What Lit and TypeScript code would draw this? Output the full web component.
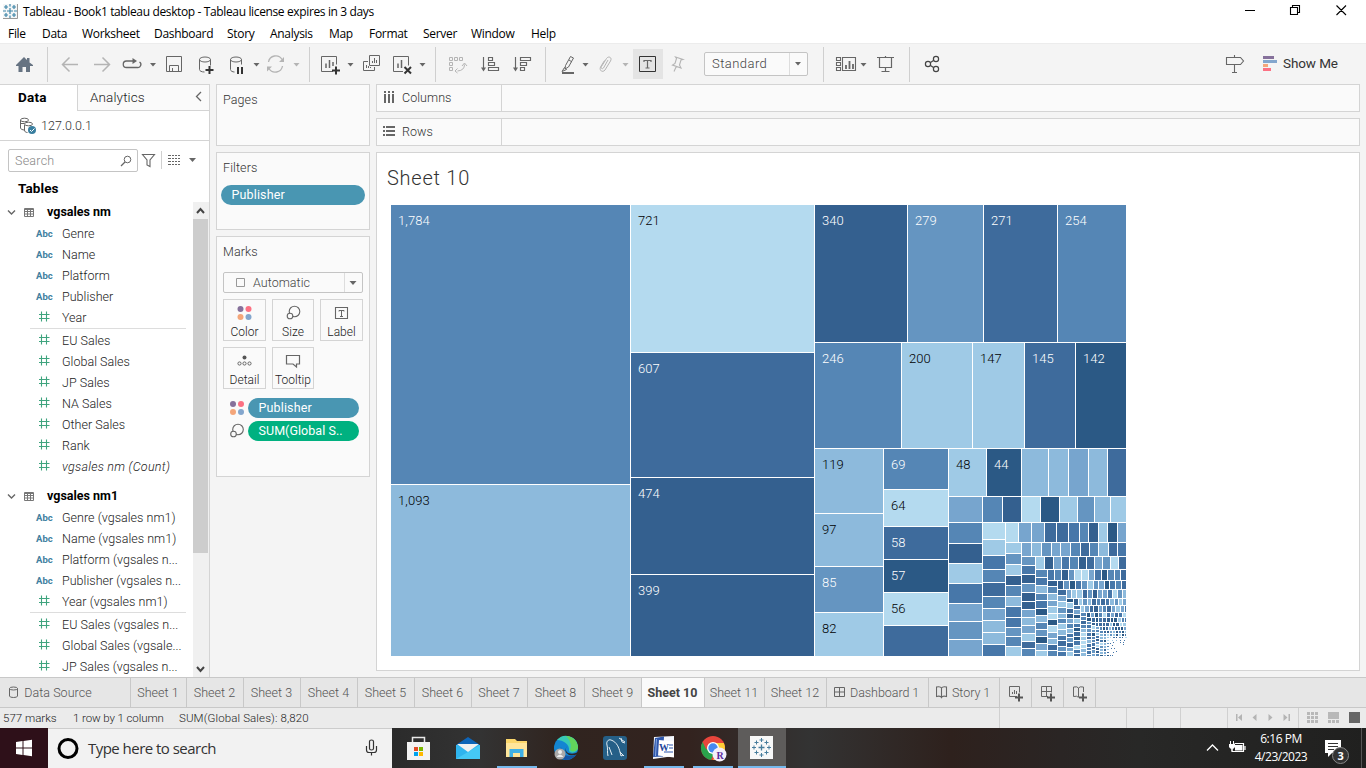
import { LitElement, html, svg, css } from "lit";
import { customElement } from "lit/decorators.js";

type Strip = [string, number, number[], string];

const PALETTE = ["#2b5985", "#34608f", "#3e6b9c", "#4777a9", "#5586b5", "#6595c1", "#77a5ce", "#8dbadc", "#9fcae6", "#b4daef"];

// Each strip: "c" column / "r" row, its far edge, inner cuts, one palette digit per cell.
const STRIPS: Strip[] = [
  ["c", 630, [484], "47"],
  ["c", 814, [352, 477, 574], "9211"],
  ["r", 342, [907, 983, 1057], "1524"],
  ["r", 448, [901, 972, 1024, 1075], "48820"],
  ["c", 883, [513, 566, 612], "7758"],
  ["c", 948, [489, 526, 559, 592, 625], "492092"],
  ["r", 496, [986, 1021, 1048, 1068, 1088, 1107], "8077672"],
  ["r", 522, [982, 1002, 1021, 1040, 1059, 1077, 1094, 1110], "641908578"],
  ["c", 982, [543, 563, 583, 603, 621, 639], "4183656"],
  ["c", 1005, [539, 555, 569, 582, 596, 608, 620, 632, 644], "9834246773"],
  ["r", 542, [1018, 1031, 1044, 1056, 1068, 1079, 1088, 1098, 1107, 1117], "96622341806"],
  ["c", 1021, [553, 564, 575, 585, 596, 606, 617, 627, 636, 646], "85814733548"],
  ["r", 556, [1031, 1041, 1051, 1060, 1070, 1080, 1089, 1098, 1108, 1117], "67566424723"],
  ["c", 1035, [565, 574, 583, 592, 601, 609, 617, 625, 633, 641, 648], "531511676824"],
  ["r", 569, [1044, 1053, 1061, 1069, 1078, 1086, 1094, 1102, 1110, 1118], "81634126592"],
  ["c", 1047, [577, 585, 593, 600, 608, 615, 622, 629, 636, 643, 650], "437430745068"],
  ["r", 580, [1054, 1061, 1068, 1074, 1081, 1088, 1094, 1101, 1107, 1114, 1120], "341599630442"],
  ["c", 1057, [586, 593, 600, 606, 613, 619, 625, 632, 638, 644, 650], "147689096724"],
  ["r", 589, [1063, 1069, 1075, 1081, 1087, 1093, 1098, 1104, 1109, 1115, 1121], "150358560342"],
  ["c", 1066, [595, 601, 607, 613, 618, 623, 629, 635, 640, 646, 651], "268574873253"],
  ["r", 598, [1071, 1076, 1082, 1087, 1092, 1097, 1102, 1107, 1112, 1117, 1122], "688251663957"],
  ["c", 1073, [602, 608, 613, 618, 623, 628, 633, 637, 642, 647, 651], "082164735268"],
  ["r", 605, [1078, 1082, 1087, 1091, 1096, 1100, 1105, 1109, 1114, 1118, 1122], "185724237586"],
];

interface Cell { x: number; y: number; w: number; h: number; c: string }

function buildCells(): Cell[] {
  const cells: Cell[] = [];
  let left = 390, top = 204;
  const right = 1126, bottom = 656;
  for (const [dir, edge, cuts, tones] of STRIPS) {
    let prev = dir === "c" ? top : left;
    [...cuts, dir === "c" ? bottom : right].forEach((cut, i) => {
      const c = PALETTE[+tones[i]];
      cells.push(dir === "c"
        ? { x: left + 1, y: prev + 1, w: edge - left - 1, h: cut - prev - 1, c }
        : { x: prev + 1, y: top + 1, w: cut - prev - 1, h: edge - top - 1, c });
      prev = cut;
    });
    if (dir === "c") left = edge; else top = edge;
  }
  // The long tail: strips keep shrinking toward the lower right corner.
  const widths = [7, 6, 5, 4, 4, 4, 3];
  const heights = [7, 5, 5, 4, 4, 3, 3];
  const pitch = [4.4, 4, 3.7, 3.4, 3, 3, 3];
  let seed = 7;
  const tone = () => {
    seed = (seed * 73 + 41) % 1009;
    return PALETTE[seed % 10];
  };
  for (let k = 0; k < widths.length; k++) {
    const w = widths[k] - 1, h = heights[k] - 1;
    for (let y = top; y < bottom - 1; y += pitch[k]) {
      const a = Math.round(y), b = Math.min(bottom, Math.round(y + pitch[k]));
      cells.push({ x: left + 1, y: a + 1, w, h: Math.max(1, b - a - 1), c: tone() });
    }
    left += widths[k];
    for (let x = left; x < right - 1; x += pitch[k]) {
      const a = Math.round(x), b = Math.min(right, Math.round(x + pitch[k]));
      cells.push({ x: a + 1, y: top + 1, w: Math.max(1, b - a - 1), h, c: tone() });
    }
    top += heights[k];
  }
  // Single pixel marks that close the tail.
  for (let x = 1107; x < 1126; x += 3) cells.push({ x, y: 637, w: x % 2 ? 2 : 1, h: 1, c: tone() });
  for (let x = 1108; x < 1126; x += 4) cells.push({ x, y: 640, w: 1, h: 1, c: tone() });
  for (let y = 640; y < 656; y += 3) cells.push({ x: 1107, y, w: 2, h: 1, c: tone() });
  for (const [x, y] of [[1110, 643], [1113, 642], [1120, 642], [1123, 642], [1123, 644], [1112, 645], [1111, 648], [1114, 648], [1116, 651], [1113, 652], [1110, 655], [1112, 655]])
    cells.push({ x, y, w: 1, h: 1, c: PALETTE[3] });
  return cells;
}

const CELLS = buildCells();

const LABELS: [number, number, string, number][] = [
  [398, 225, "1,784", 1], [398, 505, "1,093", 0], [638, 225, "721", 0], [638, 373, "607", 1], [638, 498, "474", 1],
  [638, 595, "399", 1], [822, 225, "340", 1], [915, 225, "279", 1], [991, 225, "271", 1], [1065, 225, "254", 1],
  [822, 363, "246", 1], [909, 363, "200", 0], [980, 363, "147", 0], [1032, 363, "145", 1], [1083, 363, "142", 1],
  [822, 469, "119", 0], [822, 534, "97", 0], [822, 587, "85", 1], [822, 633, "82", 0], [891, 469, "69", 1],
  [891, 510, "64", 0], [891, 547, "58", 1], [891, 580, "57", 1], [891, 613, "56", 0], [956, 469, "48", 0], [994, 469, "44", 1],
];

// Icon drawn in page units: the view box starts at the icon's own corner.
const ic = (x: number, y: number, w: number, h: number, body: unknown) =>
  html`<svg class="ic" width=${w} height=${h} viewBox="${x} ${y} ${w} ${h}">${body}</svg>`;

const G = "#666", L = "#b4b4b4";
const line = (d: string, c = G, w = 1) => svg`<path d=${d} fill="none" stroke=${c} stroke-width=${w} />`;
const fill = (d: string, c = G) => svg`<path d=${d} fill=${c} />`;
const caret = (x: number, y = 63, c = G) => fill(`M${x} ${y}h6l-3 3.5z`, c);
const sep = (x: number) => fill(`M${x} 47h1v35h-1z`, "#cfcfcf");
const dots = (x: number, y: number) => svg`<circle cx=${x} cy=${y} r="3" fill="#86719b"/><circle cx=${x + 8} cy=${y} r="3" fill="#fc7183"/><circle cx=${x} cy=${y + 8} r="3" fill="#f4a67a"/><circle cx=${x + 8} cy=${y + 8} r="3" fill="#83a6cd"/>`;
const rings = (x: number, y: number) => svg`<circle cx=${x} cy=${y} r="5.3" fill="none" stroke="#666" stroke-width="1.1"/><circle cx=${x - 4.5} cy=${y + 4.5} r="2.8" fill="#fafafa" stroke="#666" stroke-width="1.1"/>`;

const TOOLBAR_LEFT = svg`
  ${fill("M16 65L24 57l3 3v-2h2.500v4.500L33 65v1h-3v6h-4v-5h-3.500v5H18.500v-6H16z", "#667382")}
  ${sep(47)}
  ${line("M78 64.500H63M69.500 57.500l-7 7 7 7", L, 1.5)}${line("M94 64.500h15M102.500 57.500l7 7-7 7", L, 1.500)}
  ${line("M133 61h-6.500a3 3 0 0 0 0 6.500h11a3 3 0 0 0 2-5.500", G, 1.300)}${fill("M132.500 58l4.500 3-4.500 3z")}${caret(150)}
  ${line("M166.500 56.500h15v15h-15zM169.500 71v-5.500h9V71M172.500 71v-3")}
  ${line("M199.500 59.500v10c0 1.500 2 2.500 5 2.500M210.500 59.500v6M199.500 59.500a5.500 2.500 0 1 0 11 0a5.500 2.500 0 1 0-11 0")}${line("M205.500 70h8M209.500 66v8", "#333", 2)}
  ${line("M230.500 59.500v10c0 1.500 2 2.500 4 2.500M241.500 59.500v5M230.500 59.500a5.500 2.500 0 1 0 11 0a5.500 2.500 0 1 0-11 0")}${line("M238 67v7M242 67v7", "#333", 2)}
  ${caret(253.5)}
  ${line("M268.500 62a7.300 7.300 0 0 1 13.500-2.500M282.500 66a7.300 7.300 0 0 1-13.500 2.500", L, 1.300)}${fill("M284 57v5h-5zM267 71.500v-5h5z", L)}
  ${caret(293.5, 63, L)}${sep(309)}
  ${line("M333 71.500h-11.500v-15h15v8")}${line("M326 68v-4.500M329.500 68v-8M333 66v-4", G, 1.500)}${line("M332 70.500h8M336 66.500v8", "#333", 2)}
  ${caret(347.5)}
  ${line("M369.500 55.500h10v10h-10zM368 61.500h-4.500v9h11V67")}${line("M372.500 63v-2M374.500 63v-5M376.500 63v-3M366.500 68v-3M368.500 68v-2M370.500 68v-1")}
  ${line("M403 71.500h-9.500v-15h15v9")}${line("M398 68v-4.500M401.500 68v-8", G, 1.500)}${line("M404.500 67l6.500 6.500M411 67l-6.500 6.500", "#333", 2)}
  ${caret(419.5)}${sep(435)}
  ${line("M449.500 57.500h3v3h-3zM454.500 57.500h3v3h-3zM459.500 57.500h3v3h-3zM449.500 62.500h3v3h-3zM449.500 67.500h3v3h-3zM464.500 64.500q0 6-7 6.500M457.500 68.500l-2.500 2.500 2.500 2M462 66l2.500-3 2.500 3", L)}
  ${line("M483.500 57v12M488.500 57.500h4v3h-4zM488.500 62.500h6v3h-6zM488.500 67.500h10v3h-10z", G, 1.15)}${fill("M481 67.500h5l-2.500 4z")}
  ${line("M515.500 57v12M520.500 57.500h10v3h-10zM520.500 62.500h6v3h-6zM520.500 67.500h4v3h-4z", G, 1.15)}${fill("M513 67.500h5l-2.500 4z")}
  ${sep(545)}
  ${line("M565.500 65.500l5-9 3 1.500-5 9-3.500 2zM569 60l3 2M562 71.500l2.500-4 2 2z")}${fill("M562 72h12v2h-12z")}${caret(582.5)}
  ${line("M608 60l-4.500 8c-1 1.500-3 .5-2-1.500l5-8c2-3 6-1 4 2.500l-5.500 9c-2.500 3-6 .500-4.500-3l4-6.500", L)}${caret(622.5, 63, L)}
  ${fill("M633 49h30v30h-30z", "#e4e4e4")}${line("M639.500 56.500h16v15h-16z", "#333")}${line("M644 62v-1.500h7V62M647.500 60.500v8M645.500 68h4", G, 1.200)}
  ${line("M675.500 57l7.500 2.500-2 .5-1.500 5 1.500 3-8.500-3 2.500-1.500 1.500-5zM676.500 66l-2.500 5.500", L, 1.1)}
`;

const LIST: [string, string][] = [
  ["t", "vgsales nm"], ["a", "Genre"], ["a", "Name"], ["a", "Platform"], ["a", "Publisher"], ["n", "Year"], ["-", ""],
  ["n", "EU Sales"], ["n", "Global Sales"], ["n", "JP Sales"], ["n", "NA Sales"], ["n", "Other Sales"], ["n", "Rank"], ["i", "vgsales nm (Count)"], ["g", ""],
  ["t", "vgsales nm1"], ["a", "Genre (vgsales nm1)"], ["a", "Name (vgsales nm1)"], ["a", "Platform (vgsales n..."], ["a", "Publisher (vgsales n..."],
  ["n", "Year (vgsales nm1)"], ["-", ""], ["n", "EU Sales (vgsales n..."], ["n", "Global Sales (vgsale..."], ["n", "JP Sales (vgsales n..."],
];

const book = (x: number) => line(`M${x + .5} 687v9.500q4-1 5 1q1-2 5-1V687q-4-.800-5 1q-1-1.800-5-1zM${x + 5.500} 688v9.500`, G, 1.100);
const grid = (x: number) => line(`M${x + .5} 687.500h10v9h-10zM${x + 5.500} 687v10M${x} 692h11`);

@customElement("app-root")
export class AppRoot extends LitElement {
  static styles = css`
    :host { display: block; width: 1366px; height: 768px; overflow: hidden; background: #f4f4f4; color: #222; font: 300 12.5px "Roboto", sans-serif; }
    * { box-sizing: border-box; }
    .ic { display: block; flex: none; }
    .win { display: flex; flex-direction: column; height: 768px; white-space: nowrap; }
    .seg { font-family: "Open Sans", sans-serif; font-weight: 400; }
    .title { display: flex; height: 23px; background: #fff; color: #000; font-size: 12px; align-items: center; padding-left: 3px; letter-spacing: -.365px; }
    .title .cap { margin-left: 4px; flex: 1; }
    .menu { display: flex; height: 20px; background: #fff; color: #000; font-size: 12px; line-height: 21px; letter-spacing: -.3px; }
    .menu span { flex: none; }
    .m0 { width: 34px; margin-left: 8px; } .m1 { width: 40px; } .m2 { width: 72px; } .m3 { width: 73px; } .m4 { width: 43px; } .m5 { width: 59px; }
    .m6 { width: 40px; } .m7 { width: 54px; } .m8 { width: 48px; } .m9 { width: 60px; }
    .tools { display: flex; height: 41px; border-top: 1px solid #ececec; align-items: flex-start; }
    .tools > .ic { margin-top: -1px; }
    .combo { display: flex; width: 104px; height: 24px; margin-top: 8px; border: 1px solid #c4c4c4; border-radius: 2px; background: #fafafa; align-items: center; color: #444; font-size: 13px; letter-spacing: .45px; }
    .combo span { width: 85px; padding-left: 7px; border-right: 1px solid #ddd; line-height: 22px; }
    .showme { font-size: 13.500px; line-height: 38px; letter-spacing: -.1px; margin-left: 5px; font-weight: 400; color: #333; }
    .body { display: flex; height: 593px; }
    .side { width: 210px; background: #fff; border: solid #d4d4d4; border-width: 1px 1px 0 0; display: flex; flex-direction: column; }
    .tabs { display: flex; height: 26px; line-height: 25px; font-size: 13.500px; }
    .tabs .on { width: 77px; padding-left: 18px; font-weight: 700; color: #000; letter-spacing: .2px; }
    .tabs .off { flex: 1; border: solid #d4d4d4; border-width: 0 0 1px 1px; background: #fafafa; padding-left: 12px; display: flex; justify-content: space-between; letter-spacing: .12px; }
    .tabs .off .ic { margin-right: 1px; }
    .conn { display: flex; height: 30px; border-bottom: 1px solid #d4d4d4; align-items: center; padding: 0 0 1px 18px; gap: 4px; font-size: 12.500px; letter-spacing: .05px; color: #333; }
    .find { display: flex; padding: 8px 0 0 8px; height: 39px; align-items: flex-start; }
    .box { width: 130px; height: 23px; border: 1px solid #c4c4c4; border-radius: 2px; display: flex; justify-content: space-between; align-items: center; padding: 0 5px 0 6px; color: #888; letter-spacing: .25px; }
    .tbl { font-weight: 700; color: #000; font-size: 13.500px; padding-left: 18px; height: 22px; line-height: 17px; letter-spacing: .1px; }
    .lists { display: flex; flex: 1; min-height: 0; overflow: hidden; }
    .list { width: 193px; margin-top: -1px; }
    .row { display: flex; height: 21px; align-items: center; letter-spacing: .03px; }
    .row.head { font-weight: 700; color: #000; letter-spacing: 0; }
    .row.it { font-style: italic; letter-spacing: .26px; }
    .name { padding-top: 1px; }
    .abc { width: 26px; margin-left: 36px; font: 700 9.500px "Roboto", sans-serif; color: #3f7f9f; letter-spacing: 0; padding-top: 1px; }
    .num { margin-left: 36px; }
    .rule { height: 1px; background: #ddd; margin: 1px 7px 0 30px; }
    .gap { height: 9px; }
    .bar { width: 16px; background: #f0f0f0; display: flex; flex-direction: column; justify-content: space-between; height: 475px; }
    .thumb { height: 334px; margin-bottom: auto; background: #cdcdcd; width: 15px; }
    .cards { width: 154px; margin-left: 6px; display: flex; flex-direction: column; gap: 6px; }
    .card { border: 1px solid #d4d4d4; background: #fafafa; color: #444; padding: 7px 4px; }
    .card h4 { margin: 0; font: 300 12.500px/16px "Roboto", sans-serif; padding-left: 2px; letter-spacing: .1px; color: #333; }
    .pages { height: 62px; } .filters { height: 78px; } .marks { height: 241px; }
    .pill { height: 20px; border-radius: 10px; background: #4996b2; color: #fff; line-height: 20px; padding-left: 10.500px; font-weight: 400; letter-spacing: .15px; flex: 1; }
    .filters .pill { margin-top: 9px; }
    .green { background: #00b180; letter-spacing: .05px; }
    .auto { margin: 12px 2px 6px; height: 21px; border: 1px solid #c4c4c4; border-radius: 2px; display: flex; align-items: center; padding-left: 11px; letter-spacing: .05px; color: #444; }
    .auto span { flex: 1; padding-left: 7px; }
    .btns { display: grid; grid-template-columns: 43px 42px 43px; gap: 6px; padding: 0 2px; justify-content: start; column-gap: 6px; }
    .btn { height: 42px; border: 1px solid #d4d4d4; display: flex; flex-direction: column; align-items: center; color: #222; font-size: 12px; line-height: 16px; letter-spacing: 0; }
    .btn .ic { margin: 3px 0 1px; }
    .enc { display: flex; height: 20px; margin: 9px 6px 0 7px; align-items: center; }
    .enc + .enc { margin-top: 3px; }
    .enc .ic { margin-right: 1px; }
    .main { width: 984px; margin-left: 6px; display: flex; flex-direction: column; }
    .shelf { height: 28px; margin-bottom: 6px; border: 1px solid #d4d4d4; background: #fafafa; display: flex; flex: none; color: #333; letter-spacing: .05px; }
    .shelf > div { width: 125px; border-right: 1px solid #d4d4d4; display: flex; align-items: center; gap: 6px; padding: 0 0 1px 6px; }
    .sheet { height: 519px; border: 1px solid #d4d4d4; background: #fff; padding: 13px 0 0 10px; }
    .sheet h2 { margin: 0 0 13px; font: 300 20px/25px "Roboto", sans-serif; color: #333; letter-spacing: .75px; }
    .sheet svg { display: block; margin-left: 3px; }
    .lab { font: 300 13px "Roboto", sans-serif; letter-spacing: .1px; fill: #000; }
    .lab.w { fill: #fff; }
    .sheets { height: 31px; background: #e6e6e6; border: solid #c8c8c8; border-width: 1px 0; display: flex; color: #555; line-height: 29px; letter-spacing: .05px; }
    .sheets div { border-right: 1px solid #c8c8c8; display: flex; justify-content: center; align-items: center; gap: 5px; flex: none; padding-right: 1px; }
    .sheets .ds { width: 131px; padding-right: 30px; }
    .s56 { width: 56px; } .s57 { width: 57px; } .s60 { width: 60px; } .s62 { width: 62px; } .s97 { width: 102px; } .s68 { width: 71px; }
    .sheets .s31 { width: 32px; padding: 0; }
    .sheets .s97, .sheets .s68 { justify-content: flex-start; padding-left: 7px; gap: 4px; letter-spacing: -.05px; }
    .sheets .cur { width: 63px; background: #fafafa; font-weight: 700; color: #444; letter-spacing: 0; padding-bottom: 1px; }
    .status { height: 20px; background: #ebebeb; display: flex; align-items: center; font-size: 11.500px; letter-spacing: .12px; }
    .status span { flex: none; }
    .u0 { width: 73px; padding-left: 3px; letter-spacing: 0; } .u1 { width: 106px; letter-spacing: -.1px; } .status .u2 { flex: 1; }
    .task { height: 40px; display: flex; background: linear-gradient(90deg, #2b2b2b 392px, #333 480px, #30241f 560px, #33231f 690px, #333 810px, #2e211d 950px, #2a2524 1060px, #282827 1140px, #20201f 1366px); color: #fff; }
    .start { width: 48px; background: #2e1019; }
    .search { width: 344px; background: #f2f2f2; border-top: 1px solid #ccc; color: #333; display: flex; align-items: center; font-size: 15px; letter-spacing: -.53px; }
    .search span { flex: 1; padding: 0 0 2px 8px; }
    .clock { width: 64px; text-align: center; font-size: 12px; line-height: 18px; padding: 2px 2px 0 0; letter-spacing: -.48px; }
    .badge { font: 700 11px "Open Sans", sans-serif; fill: #fff; }
    .wl { font: 700 10px "Liberation Serif", serif; }
  `;

  private item([k, t]: [string, string]) {
    if (k === "-") return html`<div class="rule"></div>`;
    if (k === "g") return html`<div class="gap"></div>`;
    if (k === "t") return html`<div class="row head">${ic(0, 0, 47, 21, svg`${line("M8 9.500l3.500 3.500L15 9.500", G, 1.400)}${line("M24.500 7.500h9v8h-9zM24 8.500h10M24 10.500h10M24 13h10M27.500 8v8M30.500 8v8", "#777")}`)}${t}</div>`;
    return html`<div class="row ${k === "i" ? "it" : ""}">
      ${k === "a" ? html`<span class="abc">Abc</span>` : html`<span class="num">${ic(0, 0, 26, 21, line("M5.500 5.500v10M10.500 5.500v10M3 8.500h10.500M3 12.500h10.500", "#3fa47e", 1.100))}</span>`}<span class="name">${t}</span></div>`;
  }

  private tabs() {
    const s = (c: string, t: string) => html`<div class=${c}>${t}</div>`;
    return html`<div class="sheets">
      <div class="ds">${ic(9, 686, 11, 14, line("M10.500 688.500v7.500q0 1.500 4 1.500t4-1.500V688.500M10.500 688.500a4 1.500 0 1 0 8 0a4 1.500 0 1 0-8 0", G))}Data Source</div>
      ${s("s56", "Sheet 1")}${s("s57", "Sheet 2")}${s("s57", "Sheet 3")}${s("s57", "Sheet 4")}${s("s57", "Sheet 5")}${s("s57", "Sheet 6")}${s("s56", "Sheet 7")}${s("s57", "Sheet 8")}${s("s57", "Sheet 9")}
      ${s("cur", "Sheet 10")}${s("s60", "Sheet 11")}${s("s62", "Sheet 12")}
      <div class="s97">${ic(833, 686, 12, 13, grid(833))}Dashboard 1</div>
      <div class="s68">${ic(935, 686, 12, 13, book(935))}Story 1</div>
      <div class="s31">${ic(1000, 684, 16, 18, svg`${line("M1009 696.500h-7.500v-10h10v6M1004.500 694v-2M1006.500 694v-4M1008.500 694v-3")}${line("M1007 697.500h8M1011 693.500v8", "#555", 2)}`)}</div>
      <div class="s31">${ic(1031, 684, 16, 18, svg`${line("M1039 696.500h-6.500v-10h10v6M1037.500 686v10M1032 691.500h11")}${line("M1038 697.500h8M1042 693.500v8", "#555", 2)}`)}</div>
      <div class="s31">${ic(1061, 684, 16, 18, svg`${line("M1062.500 687v9.500q4-1 5 1M1072.500 692v-5q-4-.800-5 1q-1-1.800-5-1M1067.500 688v9")}${line("M1068 697.500h8M1072 693.500v8", "#555", 2)}`)}</div>
    </div>`;
  }

  private tray() {
    const plus = (x: number, y: number, r: number, w = 1) => line(`M${x - r} ${y}h${2 * r}M${x} ${y - r}v${2 * r}`, "#477d9c", w);
    return svg`
      <g>${fill("M407 742h23v18h-23z", "#f3f3f3")}${line("M412.500 742v-4.500h12v4.500", "#e8e8e8", 1.500)}
      ${fill("M414 747h4v4h-4z", "#e34c26")}${fill("M419 747h4v4h-4z", "#7ab800")}${fill("M414 752h4v4h-4z", "#00a3ee")}${fill("M419 752h4v4h-4z", "#ffb900")}</g>
      ${fill("M456 745l12-8 12 8v14h-24z", "#0e65b8")}${fill("M456 745h24v14h-24z", "#2fb4ee")}${fill("M456 759l24-14v14z", "#45c8f5")}${fill("M457 744h22l-11 8z", "#f1f1f1")}
      ${fill("M506 739h9l2 2h10v16h-21z", "#fbd66b")}${fill("M506 743h21v14h-21z", "#ffe59a")}${fill("M509.500 757v-8h14v8h-3.500v-4h-7v4z", "#3fb0e6")}
      <circle cx="566" cy="748" r="12" fill="#1385d2"/>${fill("M557 740a12 12 0 0 1 21 7c0 6-7 7-9 4 1-7-6-11-12-11z", "#38c9b5")}${fill("M566 736a12 12 0 0 1 12 12c-1 4-6 4-8 2 2-5 0-10-4-14z", "#62d45c")}${fill("M561 747q1 9 9 9 4 0 7-2-5 6-12 6-8-4-4-13z", "#1454a3")}${fill("M567 746q-3 4 1 7 5 2 10-1l0 2q-5 2-9 1-6-3-2-9z", "#2e2522")}<circle cx="560" cy="754" r="5.500" fill="#aaa"/><circle cx="560" cy="752" r="2" fill="#eee"/>${fill("M556.500 757q3.500-5 7 0z", "#eee")}
      <rect x="603" y="736" width="24" height="24" rx="3" fill="#255f87"/>${line("M608 756c-1-4 0-7-1-11-1-3 1-6 4-5 6 2 8 8 9 12l4 4M609 747l3 8M619 738l6 4M621 738l1 4 3 1M620 752l1 4 2-1", "#e4edf2")}
      ${fill("M654 737l20-1v20l-21 3z", "#f5f8fd")}${fill("M655 738l9-1.500-1 20-10 .5z", "#2f57ab")}${fill("M659 740l15 1.500v16l-16-2z", "#fff")}${line("M669 745h4M669 748h4M664 752h9", "#2f57ab", 1)}${line("M656.500 739l-1 17", "#89a8e0", 1)}<text class="wl" x="659" y="750.500" fill="#1f479b">W</text>
      <circle cx="713" cy="748" r="12" fill="#e8453c"/>${fill("M702.600 742A12 12 0 0 0 711 760l4-9-9-2z", "#2aa24c")}${fill("M713 743h10.900A12 12 0 0 1 713 760l5-9z", "#ffcd35")}<circle cx="713" cy="748" r="6" fill="#fff"/><circle cx="713" cy="748" r="4.700" fill="#4688f1"/><circle cx="719.500" cy="754.500" r="7" fill="#f4effa"/><text class="wl" x="716.500" y="759" fill="#5a2b9c">R</text>
      ${fill("M738 728h48v40h-48z", "#5e5c5b")}${fill("M750 736h23v23h-23z", "#f7f8f8")}
      ${plus(761.500, 747.500, 3, 1.300)}${plus(761.500, 740, 2)}${plus(761.500, 755, 2)}${plus(754, 747.500, 2)}${plus(769, 747.500, 2)}${plus(756.500, 742.500, 2)}${plus(766.500, 742.500, 2)}${plus(756.500, 752.500, 2)}${plus(766.500, 752.500, 2)}
      ${fill("M497 766h40v2h-40zM644 766h40v2h-40zM693 766h40v2h-40zM738 766h48v2h-48z", "#76b9ed")}`;
  }

  render() {
    const b = (icon: unknown, t: string) => html`<div class="btn">${icon}<span>${t}</span></div>`;
    const menu = ["File", "Data", "Worksheet", "Dashboard", "Story", "Analysis", "Map", "Format", "Server", "Window", "Help"];
    return html`<div class="win">
      <div class="title seg">${ic(3, 4, 16, 16, svg`${fill("M3 4h15v15H3z", "#f4f6f7")}${line("M17.500 4v14.500H3", "#999")}${line("M10 8v6M7 11h6M10 4v2.500M10 15.500v2.500M3 11h3M14 11h3M6 5v4M4 7h4M14 5v4M12 7h4M6 13v4M4 15h4M14 13v4M12 15h4", "#3f86a8", 1.200)}`)}
        <span class="cap">Tableau - Book1 tableau desktop - Tableau license expires in 3 days</span>
        ${ic(1236, 0, 130, 23, line("M1245 10.500h10M1290.500 7.500h7v7h-7zM1292.500 7v-1.500h7v7h-1.500M1336.500 5.500l9.500 9.500M1346 5.500l-9.500 9.500", "#000", 1.100))}
      </div>
      <div class="menu seg">${menu.map((m, i) => html`<span class="m${i}">${m}</span>`)}</div>
      <div class="tools">
        ${ic(0, 43, 704, 40, TOOLBAR_LEFT)}
        <div class="combo"><span>Standard</span>${ic(790, 53, 17, 22, caret(795, 62))}</div>
        ${ic(808, 43, 450, 40, svg`${sep(823)}${line("M836.500 57.500h4v3h-4zM836.500 62.500h4v3h-4zM836.500 67.500h4v3h-4zM842.500 57.500h13v13h-13z", G, 1.100)}${line("M846 69v-4M849.500 69v-8M853 69v-5", G, 1.800)}${caret(860.5)}
          ${line("M877 57.500h17M879.500 57.500v10h12v-10M885.500 56v2M885.500 68v3.500M881.500 71.500h8", G, 1.200)}${sep(909)}
          ${line("M930.500 62.500l3-2M930.500 65.500l3 2", "#444", 1.200)}<circle cx="928" cy="64" r="2.600" fill="none" stroke="#444" stroke-width="1.200"/><circle cx="936" cy="59" r="2.600" fill="none" stroke="#444" stroke-width="1.200"/><circle cx="936" cy="69" r="2.600" fill="none" stroke="#444" stroke-width="1.200"/>
          ${line("M1226.500 57.500h14l3 3.500-3 3.500h-14zM1234.500 55v2M1234.500 65v7.500M1232 72.500h5", G, 1.100)}`)}
        ${ic(1258, 43, 20, 40, svg`${fill("M1263 56h11v3h-11z", "#86719b")}${fill("M1263 60h14v3h-14z", "#83a6cd")}${fill("M1263 64h5v3h-5z", "#f4a67a")}${fill("M1263 68h8v3h-8z", "#fc7183")}`)}
        <span class="showme">Show Me</span>
      </div>
      <div class="body">
        <div class="side">
          <div class="tabs"><span class="on">Data</span><span class="off">Analytics${ic(190, 85, 18, 25, line("M201 92l-4.500 4.500 4.500 4.500", G, 1.300))}</span></div>
          <div class="conn">${ic(18, 115, 19, 19, svg`${line("M20.500 119v8c0 1 2 2 4 2M20.500 119a4 1.800 0 1 0 8 0a4 1.800 0 1 0-8 0M24.500 124v5c0 1.500 1 2.500 3 2.500M24.500 123a4 1.800 0 1 0 8 0a4 1.800 0 1 0-8 0M20.500 122.500h4")}<circle cx="32" cy="129" r="4" fill="#3a7fa0"/>${line("M30 129l1.500 1.500 3-3", "#fff")}`)}127.0.0.1</div>
          <div class="find"><div class="box">Search${ic(119, 154, 12, 12, svg`<circle cx="126.500" cy="158.500" r="3.300" fill="none" stroke="#666"/>${line("M124 161l-4 4", G, 1.200)}`)}</div>
            ${ic(138, 149, 71, 23, svg`${line("M142.500 154.500h12l-4.500 5.500v6.500l-3-1.500v-5z", G, 1.100)}${fill("M161 151h1v18h-1z", "#d0d0d0")}${line("M168 155.500h12M168 158.500h12M168 161.500h12M168 164.500h12", G, 1.200)}${fill("M171 154h1v12h-1zM174 154h1v12h-1zM177 154h1v12h-1z", "#fff")}${fill("M189 158h7l-3.500 4z")}`)}</div>
          <div class="tbl">Tables</div>
          <div class="lists"><div class="list">${LIST.map(r => this.item(r))}</div>
            <div class="bar">${ic(0, 0, 16, 17, line("M4 11l3.500-4 3.500 4", "#444", 2))}<div class="thumb"></div>${ic(0, 0, 16, 17, line("M4 7l3.500 4L11 7", "#444", 2))}</div></div>
        </div>
        <div class="cards">
          <div class="card pages"><h4>Pages</h4></div>
          <div class="card filters"><h4>Filters</h4><div class="pill">Publisher</div></div>
          <div class="card marks"><h4>Marks</h4>
            <div class="auto">${ic(0, 0, 11, 11, line("M1.500 1.500h8v8h-8z", "#999"))}<span>Automatic</span>${ic(0, 0, 18, 19, svg`${fill("M0 0h1v19H0z", "#ddd")}${fill("M5.500 8h7l-3.500 4z")}`)}</div>
            <div class="btns">
              ${b(ic(0, 0, 20, 20, dots(5.5, 6)), "Color")}${b(ic(0, 0, 20, 20, rings(11.500, 8.500)), "Size")}${b(ic(0, 0, 20, 20, svg`${line("M3.500 4.500h12v11h-12z", G, 1.100)}${line("M7 8.500V7.500h5v1M9.500 7.500v6M8 13.500h3")}`), "Label")}
              ${b(ic(0, 0, 20, 20, svg`<circle cx="9.500" cy="6.500" r="2" fill="#555"/><circle cx="4.500" cy="12.500" r="1.600" fill="none" stroke="#666"/><circle cx="9.500" cy="12.500" r="1.600" fill="none" stroke="#666"/><circle cx="14.500" cy="12.500" r="1.600" fill="none" stroke="#666"/>`), "Detail")}${b(ic(0, 0, 20, 20, line("M3.500 4.500h13v8.500h-3v3l-3.500-3H3.500z", G, 1.200)), "Tooltip")}
            </div>
            <div class="enc">${ic(0, 0, 19, 20, dots(5, 6))}<div class="pill">Publisher</div></div>
            <div class="enc">${ic(0, 0, 19, 20, rings(10, 8.500))}<div class="pill green">SUM(Global S..</div></div>
          </div>
        </div>
        <div class="main">
          <div class="shelf"><div>${ic(383, 90, 13, 15, fill("M384 91h2v2h-2zM388 91h2v2h-2zM392 91h2v2h-2zM384 94h2v9h-2zM388 94h2v9h-2zM392 94h2v9h-2z"))}Columns</div></div>
          <div class="shelf"><div>${ic(383, 124, 13, 15, fill("M383 126h2v2h-2zM383 130h2v2h-2zM383 134h2v2h-2zM386 126h9v2h-9zM386 130h9v2h-9zM386 134h9v2h-9z"))}Rows</div></div>
          <div class="sheet"><h2>Sheet 10</h2>
            <svg width="738" height="454" viewBox="390 204 738 454">
              ${CELLS.map(c => svg`<rect x=${c.x} y=${c.y} width=${c.w} height=${c.h} fill=${c.c} />`)}
              ${LABELS.map(([x, y, t, w]) => svg`<text class=${w ? "lab w" : "lab"} x=${x} y=${y}>${t}</text>`)}
            </svg></div>
        </div>
      </div>
      ${this.tabs()}
      <div class="status"><span class="u0">577 marks</span><span class="u1">1 row by 1 column</span><span class="u2">SUM(Global Sales): 8,820</span>
        ${ic(991, 708, 375, 20, svg`${fill("M999 708h1v20h-1zM1126 708h1v20h-1zM1153 708h1v20h-1zM1180 708h1v20h-1zM1227 708h1v20h-1zM1298 708h1v20h-1z", "#d0d0d0")}
          ${fill("M1236 714h1.500v7h-1.500zM1242 714v7l-4-3.500zM1256.500 714v7l-4-3.500zM1268.500 714v7l4-3.500zM1283.500 714v7l4-3.500zM1288.500 714h1.500v7h-1.500z", "#b4b4b4")}
          ${fill("M1307 712h3v3h-3zM1311 712h3v3h-3zM1315 712h3v3h-3zM1307 716h3v3h-3zM1311 716h3v3h-3zM1315 716h3v3h-3zM1307 720h3v3h-3zM1311 720h3v3h-3zM1315 720h3v3h-3zM1328 712h11v7h-11zM1328 720h3v3h-3zM1332 720h3v3h-3zM1336 720h3v3h-3z", "#b8b8b8")}${fill("M1349 712h11v11h-11z", "#666")}`)}
      </div>
      <div class="task seg">
        <div class="start">${ic(0, 728, 48, 40, fill("M16 742l6.500-1v6.500H16zM23.500 741l8.500-1.200v7.700h-8.500zM16 748.500h6.500v6.500l-6.500-1zM23.500 748.500h8.500v7.700l-8.500-1.200z", "#fff"))}</div>
        <div class="search">${ic(48, 728, 32, 39, svg`<circle cx="68" cy="747.500" r="9" fill="none" stroke="#000" stroke-width="3"/>`)}<span>Type here to search</span>${ic(361, 729, 31, 39, line("M369.500 741.500q0-1.500 2-1.500t2 1.500v7q0 1.500-2 1.500t-2-1.500zM366.500 746v4q0 2.500 2.500 2.500h5q2.500 0 2.500-2.500v-4M371.500 753v2.500", "#333", 1.200))}</div>
        ${ic(392, 728, 858, 40, svg`${this.tray()}${line("M1207 750.500l5.500-5.500 5.500 5.500", "#fff", 1.300)}
          ${line("M1234.500 743.500h9v8h-11.500v-3M1245 746v4", "#fff", 1.200)}${fill("M1235 745h7.500v5.500h-7.500zM1229 744h6v3q-1 2-3 2t-3-2z", "#fff")}${line("M1230.500 741v3M1233.500 741v3M1232 748v3", "#fff")}`)}
        <div class="clock">6:16 PM<br>4/23/2023</div>
        ${ic(1314, 728, 52, 40, svg`${fill("M1325 740h16v13h-9l-4 4v-4h-3z", "#fff")}${line("M1328 743.500h10M1328 746.500h10M1328 749.500h6", "#333")}<circle cx="1340.500" cy="755.500" r="8" fill="#333" stroke="#888"/><text class="badge" x="1337.500" y="759.500">3</text>${fill("M1361 728h1v40h-1z", "#555")}`)}
      </div>
    </div>`;
  }
}
